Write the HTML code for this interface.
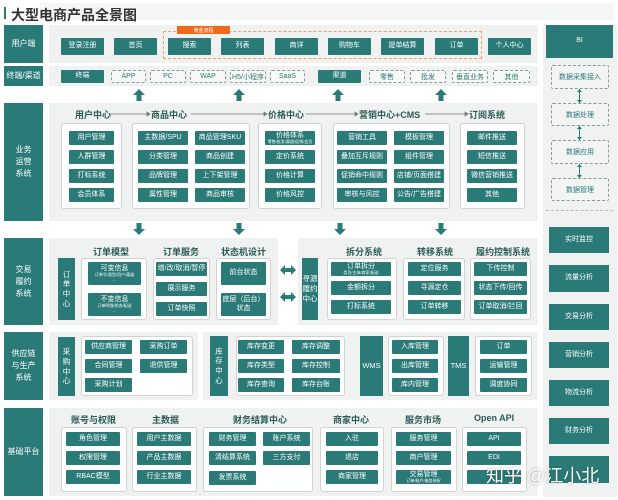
<!DOCTYPE html>
<html><head><meta charset="utf-8"><style>
*{margin:0;padding:0;box-sizing:border-box}
body{width:618px;height:500px;background:#fff;position:relative;overflow:hidden;font-family:"Liberation Sans","Noto Sans CJK SC",sans-serif}
div{position:absolute}
.t{background:#2a7a77;color:#fff;font-size:7px;display:flex;align-items:center;justify-content:center;text-align:center;line-height:1.15;border-radius:1px}
.L{background:#2a7a77;color:#fff;font-size:8px;display:flex;align-items:center;justify-content:center;text-align:center;line-height:1.5}
.g{background:#f0f1f1}
.w{background:#fff;border:1px solid #cfd3d3;border-radius:3px}
.d{border:1px dashed #8a9a9a;color:#2a7a77;font-size:7px;display:flex;align-items:center;justify-content:center;border-radius:2px;background:#f7f8f8}
.h{font-size:9px;font-weight:bold;color:#2a5a58;white-space:nowrap}
.s{font-size:4px;display:block}
</style></head><body>
<div style="left:40px;top:3px;width:574px;height:17px;background:#f5f6f6"></div>
<div style="left:4px;top:7px;width:2px;height:12px;background:#2a7a77"></div>
<div style="left:11px;top:5px;font-size:14px;font-weight:bold;color:#333;white-space:nowrap">大型电商产品全景图</div>

<!-- left labels -->
<div class="L" style="left:4px;top:25px;width:39px;height:38px">用户端</div>
<div class="L" style="left:4px;top:66px;width:39px;height:20px">终端/渠道</div>
<div class="L" style="left:4px;top:103px;width:39px;height:118px">业务<br>运营<br>系统</div>
<div class="L" style="left:4px;top:238px;width:39px;height:87px">交易<br>履约<br>系统</div>
<div class="L" style="left:4px;top:332px;width:39px;height:68px">供应链<br>与生产<br>系统</div>
<div class="L" style="left:4px;top:408px;width:39px;height:88px">基础平台</div>

<!-- row1 -->
<div class="g" style="left:49px;top:25px;width:489px;height:38px"></div>
<div style="left:163px;top:31px;width:319px;height:28px;border:1px dashed #f0a060"></div>
<div style="left:177px;top:26px;width:53px;height:8px;background:#f06a1e;color:#fff;font-size:5px;display:flex;align-items:center;justify-content:center">黄金流程</div>
<div class="t" style="left:61px;top:38px;width:43px;height:17px">登录注册</div>
<div class="t" style="left:114px;top:38px;width:43px;height:17px">首页</div>
<div class="t" style="left:168px;top:38px;width:43px;height:17px">搜索</div>
<div class="t" style="left:221px;top:38px;width:43px;height:17px">列表</div>
<div class="t" style="left:275px;top:38px;width:43px;height:17px">商详</div>
<div class="t" style="left:328px;top:38px;width:43px;height:17px">购物车</div>
<div class="t" style="left:381px;top:38px;width:43px;height:17px">提单结算</div>
<div class="t" style="left:435px;top:38px;width:43px;height:17px">订单</div>
<div class="t" style="left:488px;top:38px;width:43px;height:17px">个人中心</div>

<!-- row2 -->
<div class="g" style="left:49px;top:66px;width:489px;height:20px"></div>
<div class="t" style="left:61px;top:70px;width:43px;height:13px">终端</div>
<div class="d" style="left:111px;top:70px;width:35px;height:13px">APP</div>
<div class="d" style="left:150px;top:70px;width:36px;height:13px">PC</div>
<div class="d" style="left:190px;top:70px;width:36px;height:13px">WAP</div>
<div class="d" style="left:230px;top:70px;width:36px;height:13px">H5/小程序</div>
<div class="d" style="left:270px;top:70px;width:35px;height:13px">SaaS</div>
<div class="t" style="left:318px;top:70px;width:43px;height:13px">渠道</div>
<div class="d" style="left:369px;top:70px;width:36px;height:13px">零售</div>
<div class="d" style="left:410px;top:70px;width:36px;height:13px">批发</div>
<div class="d" style="left:452px;top:70px;width:36px;height:13px">垂直业务</div>
<div class="d" style="left:493px;top:70px;width:37px;height:13px">其他</div>

<svg style="position:absolute;left:0;top:0;z-index:0" width="618" height="500">
<g fill="#2a7a77">
<path d="M133 95 L139 89 L145 95 L141.5 95 L141.5 101 L136.5 101 L136.5 95Z"/>
<path d="M233 95 L239 89 L245 95 L241.5 95 L241.5 101 L236.5 101 L236.5 95Z"/>
<path d="M332 95 L338 89 L344 95 L340.5 95 L340.5 101 L335.5 101 L335.5 95Z"/>
<path d="M435 95 L441 89 L447 95 L443.5 95 L443.5 101 L438.5 101 L438.5 95Z"/>
<path d="M133 229 L139 235 L145 229 L141.5 229 L141.5 223 L136.5 223 L136.5 229Z"/>
<path d="M233 229 L239 235 L245 229 L241.5 229 L241.5 223 L236.5 223 L236.5 229Z"/>
<path d="M334 229 L340 235 L346 229 L342.5 229 L342.5 223 L337.5 223 L337.5 229Z"/>
<path d="M435 229 L441 235 L447 229 L443.5 229 L443.5 223 L438.5 223 L438.5 229Z"/>
<path d="M280 270 L285 265 L285 268 L291 268 L291 265 L296 270 L291 275 L291 272 L285 272 L285 275Z"/>
<path d="M280 297 L285 292 L285 295 L291 295 L291 292 L296 297 L291 302 L291 299 L285 299 L285 302Z"/>
</g>
</svg>

<!-- business -->
<div class="g" style="left:49px;top:103px;width:489px;height:118px"></div>
<svg style="position:absolute;left:0;top:0" width="618" height="500">
<g stroke="#777" stroke-width="0.7" fill="#777">
<line x1="110" y1="114" x2="147" y2="114"/><path d="M147 112 L150 114 L147 116Z"/>
<line x1="191" y1="114" x2="264" y2="114"/><path d="M264 112 L267 114 L264 116Z"/>
<line x1="306" y1="114" x2="355" y2="114"/><path d="M355 112 L358 114 L355 116Z"/>
<line x1="425" y1="114" x2="465" y2="114"/><path d="M465 112 L468 114 L465 116Z"/>
</g>
<g fill="#2a7a77">
<rect x="579" y="90" width="1" height="12"/><rect x="579" y="127" width="1" height="12"/><rect x="579" y="165" width="1" height="12"/>
</g>
</svg>
<div class="h" style="left:75px;top:108px">用户中心</div>
<div class="h" style="left:151px;top:108px">商品中心</div>
<div class="h" style="left:268px;top:108px">价格中心</div>
<div class="h" style="left:359px;top:108px">营销中心+CMS</div>
<div class="h" style="left:469px;top:108px">订阅系统</div>
<div class="w" style="left:61px;top:123px;width:61px;height:86px"></div>
<div class="w" style="left:132px;top:123px;width:118px;height:86px"></div>
<div class="w" style="left:258px;top:123px;width:64px;height:86px"></div>
<div class="w" style="left:333px;top:123px;width:117px;height:86px"></div>
<div class="w" style="left:460px;top:123px;width:65px;height:86px"></div>
<div class="t" style="left:69px;top:131px;width:45px;height:14px">用户管理</div>
<div class="t" style="left:69px;top:150px;width:45px;height:14px">人群管理</div>
<div class="t" style="left:69px;top:169px;width:45px;height:14px">打标系统</div>
<div class="t" style="left:69px;top:188px;width:45px;height:14px">会员体系</div>
<div class="t" style="left:138px;top:131px;width:50px;height:14px">主数据/SPU</div>
<div class="t" style="left:138px;top:150px;width:50px;height:14px">分类管理</div>
<div class="t" style="left:138px;top:169px;width:50px;height:14px">品牌管理</div>
<div class="t" style="left:138px;top:188px;width:50px;height:14px">属性管理</div>
<div class="t" style="left:195px;top:131px;width:50px;height:14px">商品管理SKU</div>
<div class="t" style="left:195px;top:150px;width:50px;height:14px">商品创建</div>
<div class="t" style="left:195px;top:169px;width:50px;height:14px">上下架管理</div>
<div class="t" style="left:195px;top:188px;width:50px;height:14px">商品审核</div>
<div class="t" style="left:265px;top:131px;width:50px;height:14px"><span>价格体系<span class="s">零售/批发/渠道/促销/会员</span></span></div>
<div class="t" style="left:265px;top:150px;width:50px;height:14px">定价系统</div>
<div class="t" style="left:265px;top:169px;width:50px;height:14px">价格计算</div>
<div class="t" style="left:265px;top:188px;width:50px;height:14px">价格风控</div>
<div class="t" style="left:337px;top:131px;width:50px;height:14px">营销工具</div>
<div class="t" style="left:337px;top:150px;width:50px;height:14px">叠加互斥规则</div>
<div class="t" style="left:337px;top:169px;width:50px;height:14px">促销命中规则</div>
<div class="t" style="left:337px;top:188px;width:50px;height:14px">审核与风控</div>
<div class="t" style="left:394px;top:131px;width:50px;height:14px">模板管理</div>
<div class="t" style="left:394px;top:150px;width:50px;height:14px">组件管理</div>
<div class="t" style="left:394px;top:169px;width:50px;height:14px">店铺/页面搭建</div>
<div class="t" style="left:394px;top:188px;width:50px;height:14px">公告/广告搭建</div>
<div class="t" style="left:467px;top:131px;width:50px;height:14px">邮件推送</div>
<div class="t" style="left:467px;top:150px;width:50px;height:14px">短信推送</div>
<div class="t" style="left:467px;top:169px;width:50px;height:14px">微信营销推送</div>
<div class="t" style="left:467px;top:188px;width:50px;height:14px">其他</div>

<!-- transaction -->
<div class="g" style="left:49px;top:238px;width:229px;height:87px"></div>
<div class="g" style="left:298px;top:238px;width:240px;height:87px"></div>
<div class="L" style="left:58px;top:258px;width:17px;height:62px;font-size:7.5px;line-height:1.3">订<br>单<br>中<br>心</div>
<div class="h" style="left:93px;top:245px">订单模型</div>
<div class="h" style="left:163px;top:245px">订单服务</div>
<div class="h" style="left:221px;top:245px">状态机设计</div>
<div class="w" style="left:81px;top:258px;width:66px;height:62px"></div>
<div class="w" style="left:153px;top:258px;width:57px;height:62px"></div>
<div class="w" style="left:216px;top:258px;width:55px;height:62px"></div>
<div class="t" style="left:88px;top:262px;width:53px;height:23px"><span>可变信息<span class="s">订单号/类型/用户/渠道</span><span class="s">...</span></span></div>
<div class="t" style="left:88px;top:293px;width:53px;height:23px"><span>不变信息<span class="s">订单明细/状态/配送</span><span class="s">...</span></span></div>
<div class="t" style="left:156px;top:262px;width:51px;height:14px">增/改/取消/暂停</div>
<div class="t" style="left:156px;top:282px;width:51px;height:14px">展示服务</div>
<div class="t" style="left:156px;top:302px;width:51px;height:14px">订单快照</div>
<div class="t" style="left:221px;top:262px;width:45px;height:23px">前台状态</div>
<div class="t" style="left:221px;top:293px;width:45px;height:23px">底层（后台）<br>状态</div>
<div class="L" style="left:302px;top:258px;width:16px;height:62px;font-size:7.5px;line-height:1.3">寻源<br>履约<br>中心</div>
<div class="h" style="left:346px;top:245px">拆分系统</div>
<div class="h" style="left:417px;top:245px">转移系统</div>
<div class="h" style="left:476px;top:245px">履约控制系统</div>
<div class="w" style="left:327px;top:258px;width:70px;height:62px"></div>
<div class="w" style="left:403px;top:258px;width:62px;height:62px"></div>
<div class="w" style="left:470px;top:258px;width:61px;height:62px"></div>
<div class="t" style="left:331px;top:262px;width:60px;height:14px"><span>订单拆分<span class="s">类目/主体/商家/配送</span></span></div>
<div class="t" style="left:331px;top:281px;width:60px;height:14px">金额拆分</div>
<div class="t" style="left:331px;top:300px;width:60px;height:14px">打标系统</div>
<div class="t" style="left:408px;top:262px;width:53px;height:14px">定位服务</div>
<div class="t" style="left:408px;top:281px;width:53px;height:14px">寻源定仓</div>
<div class="t" style="left:408px;top:300px;width:53px;height:14px">订单转移</div>
<div class="t" style="left:474px;top:262px;width:53px;height:14px">下传控制</div>
<div class="t" style="left:474px;top:281px;width:53px;height:14px">状态下传/回传</div>
<div class="t" style="left:474px;top:300px;width:53px;height:14px">订单取消/拦回</div>

<!-- supply -->
<div class="g" style="left:49px;top:332px;width:149px;height:68px"></div>
<div class="g" style="left:203px;top:332px;width:335px;height:68px"></div>
<div class="L" style="left:58px;top:337px;width:17px;height:59px;font-size:7.5px;line-height:1.3">采<br>购<br>中<br>心</div>
<div class="w" style="left:81px;top:336px;width:112px;height:60px"></div>
<div class="t" style="left:85px;top:340px;width:47px;height:14px">供应商管理</div>
<div class="t" style="left:140px;top:340px;width:47px;height:14px">采购订单</div>
<div class="t" style="left:85px;top:359px;width:47px;height:14px">合同管理</div>
<div class="t" style="left:140px;top:359px;width:47px;height:14px">退供管理</div>
<div class="t" style="left:85px;top:378px;width:47px;height:14px">采购计划</div>
<div class="L" style="left:210px;top:336px;width:18px;height:60px;font-size:7.5px;line-height:1.3">库<br>存<br>中<br>心</div>
<div class="w" style="left:236px;top:336px;width:109px;height:60px"></div>
<div class="t" style="left:238px;top:340px;width:46px;height:14px">库存变更</div>
<div class="t" style="left:238px;top:359px;width:46px;height:14px">库存类型</div>
<div class="t" style="left:238px;top:378px;width:46px;height:14px">库存查询</div>
<div class="t" style="left:292px;top:340px;width:48px;height:14px">库存调整</div>
<div class="t" style="left:292px;top:359px;width:48px;height:14px">库存控制</div>
<div class="t" style="left:292px;top:378px;width:48px;height:14px">库存台账</div>
<div class="L" style="left:360px;top:336px;width:23px;height:60px;font-size:7.5px">WMS</div>
<div class="w" style="left:388px;top:336px;width:56px;height:60px"></div>
<div class="t" style="left:392px;top:340px;width:46px;height:14px">入库管理</div>
<div class="t" style="left:392px;top:359px;width:46px;height:14px">出库管理</div>
<div class="t" style="left:392px;top:378px;width:46px;height:14px">库内管理</div>
<div class="L" style="left:448px;top:336px;width:21px;height:60px;font-size:7.5px">TMS</div>
<div class="w" style="left:475px;top:336px;width:57px;height:60px"></div>
<div class="t" style="left:480px;top:340px;width:47px;height:14px">订单</div>
<div class="t" style="left:480px;top:359px;width:47px;height:14px">运输管理</div>
<div class="t" style="left:480px;top:378px;width:47px;height:14px">调度协同</div>

<!-- foundation -->
<div class="g" style="left:49px;top:408px;width:489px;height:88px"></div>
<div class="h" style="left:71px;top:413px">账号与权限</div>
<div class="h" style="left:152px;top:413px">主数据</div>
<div class="h" style="left:233px;top:413px">财务结算中心</div>
<div class="h" style="left:333px;top:413px">商家中心</div>
<div class="h" style="left:405px;top:413px">服务市场</div>
<div class="h" style="left:474px;top:413px">Open API</div>
<div class="w" style="left:61px;top:427px;width:66px;height:65px"></div>
<div class="w" style="left:132px;top:427px;width:65px;height:65px"></div>
<div class="w" style="left:203px;top:427px;width:110px;height:65px"></div>
<div class="w" style="left:320px;top:427px;width:64px;height:65px"></div>
<div class="w" style="left:391px;top:427px;width:66px;height:65px"></div>
<div class="w" style="left:462px;top:427px;width:65px;height:65px"></div>
<div class="t" style="left:66px;top:432px;width:54px;height:14px">角色管理</div>
<div class="t" style="left:66px;top:451px;width:54px;height:14px">权限管理</div>
<div class="t" style="left:66px;top:470px;width:54px;height:14px">RBAC模型</div>
<div class="t" style="left:137px;top:432px;width:54px;height:14px">用户主数据</div>
<div class="t" style="left:137px;top:451px;width:54px;height:14px">产品主数据</div>
<div class="t" style="left:137px;top:470px;width:54px;height:14px">行业主数据</div>
<div class="t" style="left:209px;top:432px;width:47px;height:14px">财务管理</div>
<div class="t" style="left:263px;top:432px;width:47px;height:14px">账户系统</div>
<div class="t" style="left:209px;top:451px;width:47px;height:14px">清结算系统</div>
<div class="t" style="left:263px;top:451px;width:47px;height:14px">三方支付</div>
<div class="t" style="left:209px;top:471px;width:47px;height:14px">发票系统</div>
<div class="t" style="left:326px;top:432px;width:52px;height:14px">入驻</div>
<div class="t" style="left:326px;top:451px;width:52px;height:14px">退店</div>
<div class="t" style="left:326px;top:470px;width:52px;height:14px">商家管理</div>
<div class="t" style="left:396px;top:432px;width:55px;height:14px">服务管理</div>
<div class="t" style="left:396px;top:451px;width:55px;height:14px">商户管理</div>
<div class="t" style="left:396px;top:470px;width:55px;height:14px"><span>交易管理<span class="s">订单/账户/服务授权</span></span></div>
<div class="t" style="left:467px;top:432px;width:54px;height:14px">API</div>
<div class="t" style="left:467px;top:451px;width:54px;height:14px">EDI</div>
<div class="t" style="left:467px;top:470px;width:54px;height:14px"></div>

<!-- right column -->
<div class="g" style="left:543px;top:25px;width:74px;height:472px"></div>
<div class="L" style="left:546px;top:25px;width:67px;height:33px;font-size:7px">BI</div>
<svg style="position:absolute;left:0;top:0" width="618" height="500"><g fill="#2a7a77">
<rect x="579" y="89" width="1" height="14"/><rect x="579" y="126" width="1" height="14"/><rect x="579" y="164" width="1" height="14"/>
<path d="M577 92 L579.5 89 L582 92Z M577 100 L579.5 103 L582 100Z M577 129 L579.5 126 L582 129Z M577 137 L579.5 140 L582 137Z M577 167 L579.5 164 L582 167Z M577 175 L579.5 178 L582 175Z"/>
</g></svg>
<div class="d" style="left:551px;top:65px;width:58px;height:24px;background:#f3f4f4">数据采集接入</div>
<div class="d" style="left:551px;top:103px;width:58px;height:23px;background:#f3f4f4">数据处理</div>
<div class="d" style="left:551px;top:140px;width:58px;height:24px;background:#f3f4f4">数据应用</div>
<div class="d" style="left:551px;top:178px;width:58px;height:23px;background:#f3f4f4">数据管理</div>
<div style="left:546px;top:210px;width:67px;height:0;border-top:1px dashed #bbb"></div>
<div class="L" style="left:549px;top:227px;width:60px;height:26px;font-size:7px">实时监控</div>
<div class="L" style="left:549px;top:265px;width:60px;height:27px;font-size:7px">流量分析</div>
<div class="L" style="left:549px;top:304px;width:60px;height:26px;font-size:7px">交易分析</div>
<div class="L" style="left:549px;top:342px;width:60px;height:26px;font-size:7px">营销分析</div>
<div class="L" style="left:549px;top:380px;width:60px;height:26px;font-size:7px">物流分析</div>
<div class="L" style="left:549px;top:418px;width:60px;height:26px;font-size:7px">财务分析</div>
<div class="L" style="left:549px;top:456px;width:60px;height:27px;font-size:7px"></div>

<div style="left:486px;top:462px;font-size:18px;color:#fff;white-space:nowrap;text-shadow:0 0 2px rgba(0,0,0,.35)">知乎 @江小北</div>
</body></html>
